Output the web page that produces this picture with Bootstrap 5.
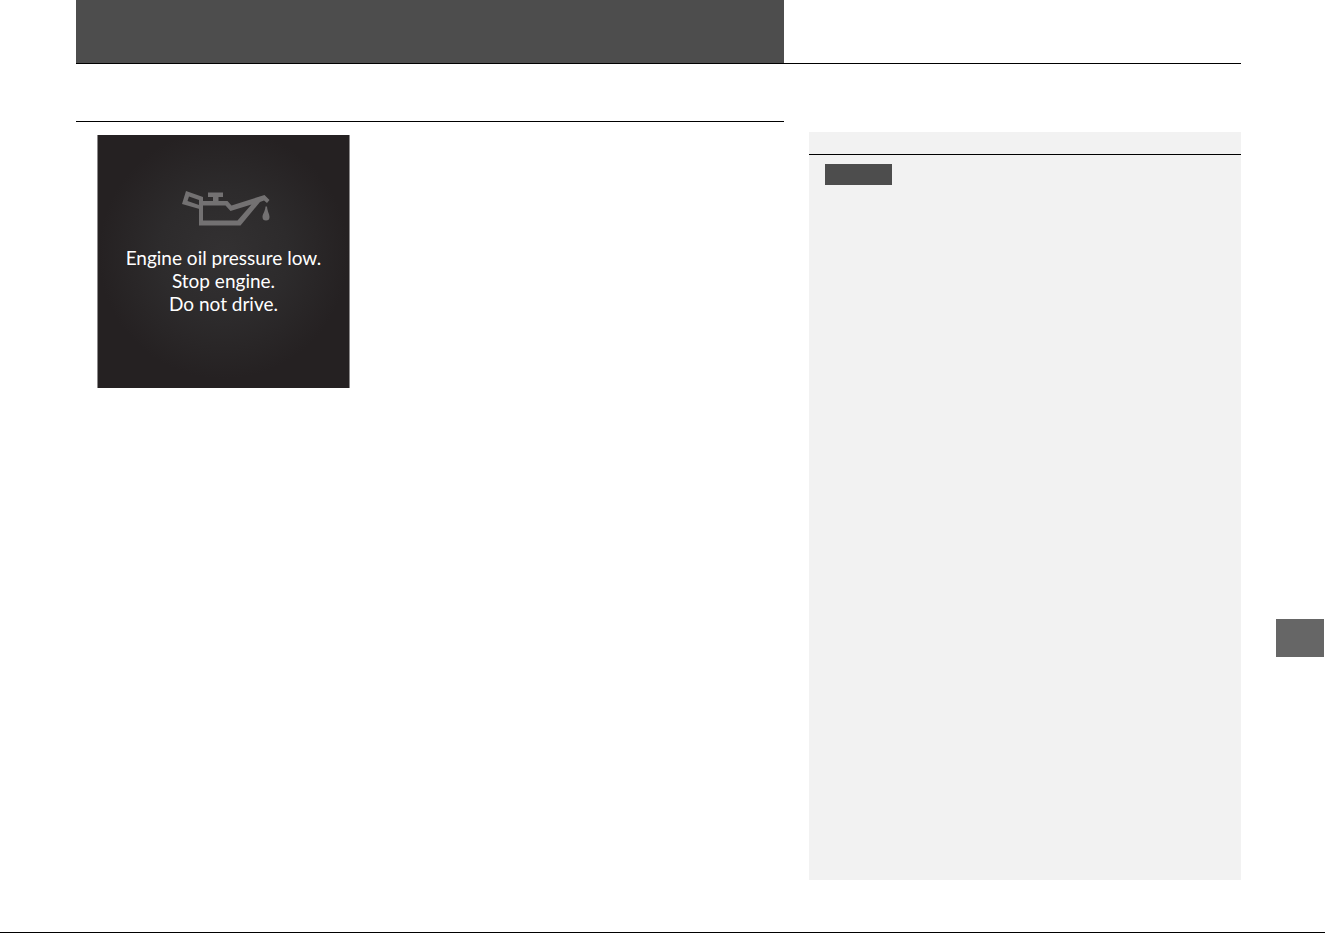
<!DOCTYPE html>
<html lang="en">
<head>
<meta charset="utf-8">
<meta name="viewport" content="width=device-width, initial-scale=1">
<title>Engine oil pressure low</title>
<link href="https://cdn.jsdelivr.net/npm/bootstrap@5.3.0/dist/css/bootstrap.min.css" rel="stylesheet">
<style>
  body { background: #fff; font-family: Lato, "Liberation Sans", sans-serif; }
  .columns { display: grid; grid-template-columns: minmax(0, 1fr) 432px; column-gap: 25px; }
  .page-head { margin: 0 84px 0 76px; border-bottom: 1px solid #000; }
  .title-band { height: 63px; background: #4d4d4d; }
  .sheet { padding-left: 76px; }
  .topic-rule { height: 58px; border-bottom: 1px solid #000; }
  .display { width: 253px; height: 253px; margin: 13px 0 0 21px; padding-top: 56px;
    border: 0 solid #8c8a8b; border-width: 0 1px;
    background: radial-gradient(circle at 50% 47%, #333132 0, #2d2b2c 35%, #252122 68%); }
  .display svg { width: 92px; height: 35px; }
  .message { margin-top: 20px; font-size: 19px; line-height: 23px; color: #fff; }
  .side-note { margin: 68px 0 52px; background: #f2f2f2; }
  .note-head { height: 23px; border-bottom: 1px solid #000; }
  .note-tag { width: 67px; height: 21px; margin: 9px 0 0 16px; background: #4d4d4d; }
  .rail { flex: 0 0 84px; padding: 0 1px 0 35px; }
  .above { flex: 111 1 0; }
  .below { flex: 55 1 0; }
  .chapter-tab { height: 38px; background: #666; }
  .page-end { height: 1px; background: #000; }
</style>
</head>
<body>
<div class="d-flex flex-column min-vh-100">
  <header class="page-head columns">
    <div class="title-band"></div>
  </header>
  <div class="sheet d-flex flex-grow-1">
    <div class="columns flex-grow-1">
      <main>
        <div class="topic-rule"></div>
        <section class="display text-center">
          <svg class="d-block mx-auto" viewBox="-4 0 92 35" fill="#737172" aria-hidden="true">
            <path fill-rule="evenodd" d="M4 0L21 6V19L0 13ZM7 5.5L5.5 10L17 14V9Z"/>
            <path fill-rule="evenodd" d="M17 10H45.500L49.500 14.500L82.500 4L87.500 9L85 12L82 9.500L78 11L58.500 34.500H17ZM21 14.500V29.500H55.500L69.500 13.500L48.500 20L43.500 14.500Z"/>
            <path d="M26 1.500H41V6H36.500V11H31V6H26Z"/>
            <path d="M83.500 15.500H85C85.500 21 87.500 23 87.500 26A3.500 3.500 0 0 1 80.500 26C80.500 23 83 21 83.500 15.500Z"/>
          </svg>
          <p class="message mb-0">Engine oil pressure low.<br>Stop engine.<br>Do not drive.</p>
        </section>
      </main>
      <aside class="side-note">
        <div class="note-head"></div>
        <div class="note-tag"></div>
      </aside>
    </div>
    <div class="rail d-flex flex-column">
      <div class="above"></div>
      <div class="chapter-tab"></div>
      <div class="below"></div>
    </div>
  </div>
  <footer class="page-end"></footer>
</div>
<script src="https://cdn.jsdelivr.net/npm/bootstrap@5.3.0/dist/js/bootstrap.bundle.min.js"></script>
</body>
</html>
